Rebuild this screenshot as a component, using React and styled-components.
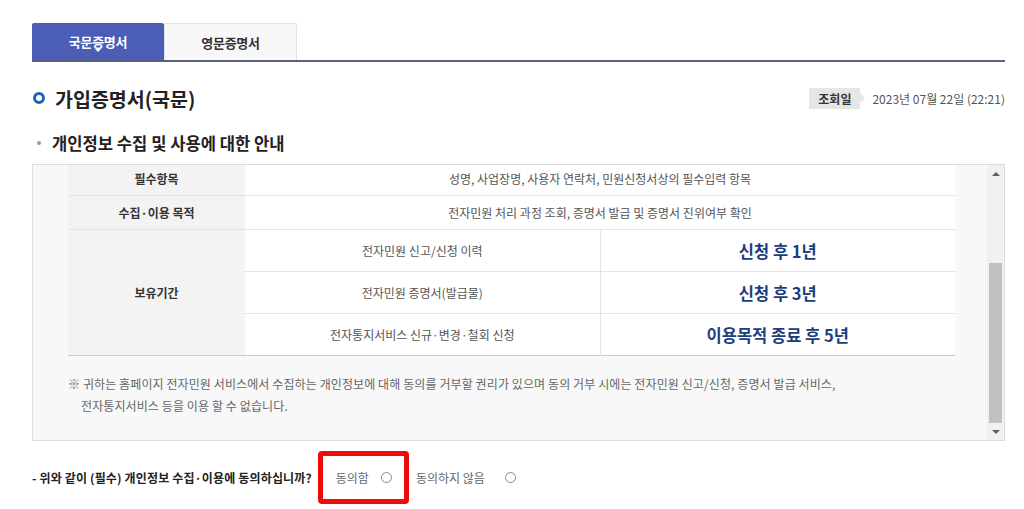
import React from "react";
import styled, { createGlobalStyle } from "styled-components";

const GlobalStyle = createGlobalStyle`
  html, body {
    margin: 0;
    padding: 0;
    background: #fff;
  }
  body {
    font-family: "Noto Sans CJK KR", "Noto Sans", "Liberation Sans", sans-serif;
    color: #333;
  }
`;

const Page = styled.div`
  width: 973px;
  padding: 23px 19px 0 32px;
`;

const TabBar = styled.div`
  display: flex;
  border-bottom: 2px solid #56627f;
`;

const Tab = styled.div`
  position: relative;
  width: ${(p) => (p.active ? "132px" : "133px")};
  height: 37px;
  display: flex;
  align-items: center;
  justify-content: center;
  box-sizing: border-box;
  font-size: 13px;
  font-weight: 700;
  letter-spacing: -0.3px;
  color: ${(p) => (p.active ? "#fff" : "#333")};
  background: ${(p) => (p.active ? "#4b5db5" : "#f8f8f8")};
  border: ${(p) => (p.active ? "none" : "1px solid #e2e2e2")};
  border-bottom: none;
  border-radius: 2px 2px 0 0;

  ${(p) =>
    p.active &&
    `
    &::after {
      content: "";
      position: absolute;
      left: 50%;
      bottom: 8px;
      margin-left: -3px;
      border-left: 3px solid transparent;
      border-right: 3px solid transparent;
      border-top: 3px solid #fff;
    }
  `}
`;

const TitleRow = styled.div`
  margin-top: 18px;
  height: 36px;
  display: flex;
  align-items: center;
  justify-content: space-between;
`;

const Title = styled.h2`
  margin: 0;
  display: flex;
  align-items: center;
  gap: 10px;
  font-size: 19.5px;
  font-weight: 700;
  color: #222;
`;

const Ring = styled.span`
  width: 12px;
  height: 12px;
  box-sizing: border-box;
  border: 3px solid #1f64ad;
  border-radius: 50%;
  margin-left: 1px;
`;

const Meta = styled.div`
  display: flex;
  align-items: center;
  gap: 12px;
  font-size: 12px;
  color: #555;
`;

const Badge = styled.span`
  position: relative;
  height: 21px;
  padding: 0 9px;
  display: flex;
  align-items: center;
  background: #e6e6e6;
  font-weight: 700;
  color: #333;

  &::after {
    content: "";
    position: absolute;
    right: -5px;
    top: 50%;
    margin-top: -5px;
    border-top: 5px solid transparent;
    border-bottom: 5px solid transparent;
    border-left: 5px solid #e6e6e6;
  }
`;

const SubTitle = styled.h3`
  margin: 15px 0 0;
  height: 24px;
  display: flex;
  align-items: center;
  gap: 11px;
  font-size: 16.6px;
  font-weight: 700;
  color: #222;

  &::before {
    content: "";
    width: 4px;
    height: 4px;
    border-radius: 50%;
    background: #8a9bb8;
    margin-left: 5px;
  }
`;

const Box = styled.div`
  margin-top: 9px;
  height: 277px;
  box-sizing: border-box;
  border: 1px solid #dcdcdc;
  background: #f8f8f8;
  display: flex;
`;

const Content = styled.div`
  flex: 1;
  overflow: hidden;
  display: flex;
  flex-direction: column;
  justify-content: flex-end;
  padding: 0 32px 0 35px;
`;

const ScrollBar = styled.div`
  width: 17px;
  background: #f1f1f1;
  display: flex;
  flex-direction: column;
`;

const Arrow = styled.div`
  height: 17px;
  display: flex;
  align-items: center;
  justify-content: center;

  &::before {
    content: "";
    border-left: 4px solid transparent;
    border-right: 4px solid transparent;
    ${(p) => (p.down ? "border-top: 4px solid #606060;" : "border-bottom: 4px solid #606060;")}
  }
`;

const Track = styled.div`
  flex: 1;
  display: flex;
  flex-direction: column;
  justify-content: flex-end;
`;

const Thumb = styled.div`
  height: 160px;
  margin: 0 2px;
  background: #c1c1c1;
`;

const Table = styled.table`
  width: 887px;
  flex-shrink: 0;
  border-collapse: collapse;
  table-layout: fixed;
  border-bottom: 1px solid #c9c9c9;
  font-size: 12px;
`;

const Th = styled.th`
  background: #f3f3f3;
  font-weight: 700;
  color: #333;
  height: ${(p) => p.h || 33}px;
  padding: 0;
  border-top: 1px solid #e4e4e4;
`;

const Td = styled.td`
  background: #fff;
  text-align: center;
  color: #555;
  height: ${(p) => p.h || 33}px;
  padding: 0;
  border-top: 1px solid #e4e4e4;
  border-left: ${(p) => (p.divide ? "1px solid #e4e4e4" : "none")};
`;

const Period = styled(Td)`
  font-size: 16.5px;
  font-weight: 700;
  color: #1c3d7e;
`;

const Note = styled.p`
  margin: 17px 0 0;
  padding: 0 0 23px;
  font-size: 12px;
  line-height: 22px;
  color: #666;
  letter-spacing: 0.1px;

  span {
    display: block;
    padding-left: 13px;
  }
`;

const Question = styled.div`
  margin-top: 10px;
  display: flex;
  align-items: center;
  font-size: 12px;
`;

const Ask = styled.strong`
  font-weight: 700;
  color: #222;
  letter-spacing: 0.15px;
  margin-right: 6px;
`;

const Choice = styled.label`
  display: flex;
  align-items: center;
  box-sizing: border-box;
  height: 53px;
  gap: ${(p) => p.gap}px;
  color: #666;
  ${(p) =>
    p.marked
      ? `
    padding: 0 12px 0 13px;
    border: 5px solid #ee0b0b;
    border-radius: 4px;
    margin-right: 7px;
  `
      : ""}
`;

const Radio = styled.input.attrs({ type: "radio" })`
  appearance: none;
  margin: 0;
  width: 11px;
  height: 11px;
  border: 1px solid #8a8a8a;
  border-radius: 50%;
  background: #fff;
`;

const periods = [
  { item: "전자민원 신고/신청 이력", term: "신청 후 1년" },
  { item: "전자민원 증명서(발급물)", term: "신청 후 3년" },
  { item: "전자통지서비스 신규·변경·철회 신청", term: "이용목적 종료 후 5년" },
];

export default function App() {
  return (
    <>
      <GlobalStyle />
      <Page>
        <TabBar>
          <Tab active>국문증명서</Tab>
          <Tab>영문증명서</Tab>
        </TabBar>

        <TitleRow>
          <Title>
            <Ring />
            가입증명서(국문)
          </Title>
          <Meta>
            <Badge>조회일</Badge>
            <span>2023년 07월 22일 (22:21)</span>
          </Meta>
        </TitleRow>

        <SubTitle>개인정보 수집 및 사용에 대한 안내</SubTitle>

        <Box>
          <Content>
            <Table>
              <colgroup>
                <col style={{ width: 177 }} />
                <col style={{ width: 355 }} />
                <col style={{ width: 355 }} />
              </colgroup>
              <tbody>
                <tr>
                  <Th>필수항목</Th>
                  <Td colSpan={2}>성명, 사업장명, 사용자 연락처, 민원신청서상의 필수입력 항목</Td>
                </tr>
                <tr>
                  <Th>수집·이용 목적</Th>
                  <Td colSpan={2}>전자민원 처리 과정 조회, 증명서 발급 및 증명서 진위여부 확인</Td>
                </tr>
                {periods.map((p, i) => (
                  <tr key={p.item}>
                    {i === 0 && (
                      <Th rowSpan={3} h={41}>
                        보유기간
                      </Th>
                    )}
                    <Td h={41}>{p.item}</Td>
                    <Period h={41} divide>
                      {p.term}
                    </Period>
                  </tr>
                ))}
              </tbody>
            </Table>
            <Note>
              ※ 귀하는 홈페이지 전자민원 서비스에서 수집하는 개인정보에 대해 동의를 거부할 권리가 있으며 동의 거부 시에는
              전자민원 신고/신청, 증명서 발급 서비스,
              <span>전자통지서비스 등을 이용 할 수 없습니다.</span>
            </Note>
          </Content>
          <ScrollBar>
            <Arrow />
            <Track>
              <Thumb />
            </Track>
            <Arrow down />
          </ScrollBar>
        </Box>

        <Question>
          <Ask>- 위와 같이 (필수) 개인정보 수집·이용에 동의하십니까?</Ask>
          <Choice marked gap={12}>
            동의함 <Radio name="agree" />
          </Choice>
          <Choice gap={20}>
            동의하지 않음 <Radio name="agree" />
          </Choice>
        </Question>
      </Page>
    </>
  );
}
